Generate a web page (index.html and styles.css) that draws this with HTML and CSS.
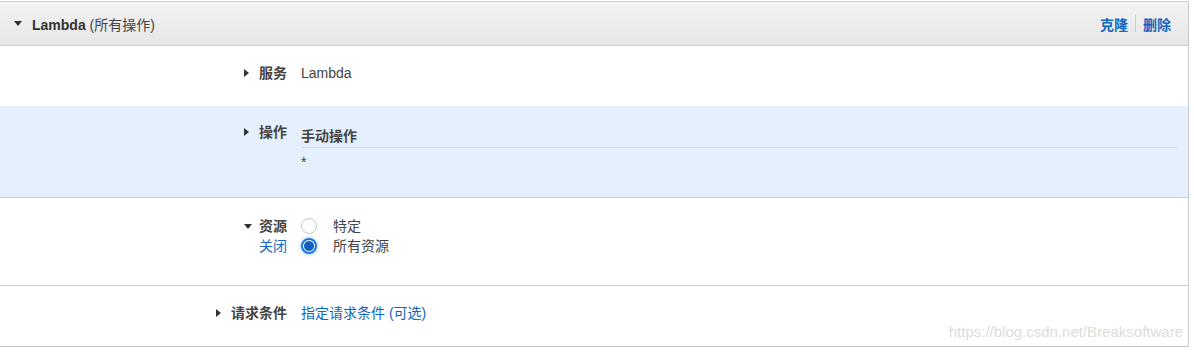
FILE: index.html
```html
<!DOCTYPE html>
<html lang="zh">
<head>
    <meta charset="UTF-8">
    <title>Lambda 权限</title>
    <link rel="stylesheet" href="styles.css">
</head>
<body>
    <div class="panel">
        <div class="panel-head">
            <span class="caret-down"></span>
            <span class="head-title"><b>Lambda</b> (所有操作)</span>
            <span class="head-actions">
                <a href="#">克隆</a><span class="sep"></span><a href="#">删除</a>
            </span>
        </div>

        <div class="row row-service">
            <div class="label"><span class="caret-right"></span>服务</div>
            <div class="value">Lambda</div>
        </div>

        <div class="row row-action">
            <div class="label"><span class="caret-right"></span>操作</div>
            <div class="value">
                <div class="action-title">手动操作</div>
                <div class="action-list">*</div>
            </div>
        </div>

        <div class="row row-resource">
            <div class="label">
                <div><span class="caret-down small"></span>资源</div>
                <a href="#">关闭</a>
            </div>
            <div class="value">
                <label class="radio"><span class="dot"></span>特定</label>
                <label class="radio"><span class="dot checked"></span>所有资源</label>
            </div>
        </div>

        <div class="row row-cond">
            <div class="label"><span class="caret-right"></span>请求条件</div>
            <div class="value"><a href="#">指定请求条件 (可选)</a></div>
        </div>

        <div class="watermark">https://blog.csdn.net/Breaksoftware</div>
    </div>
</body>
</html>
```

FILE: styles.css
```css
body {
    margin: 0;
    padding-top: 1px;
    font-family: "Liberation Sans", Arial, "Noto Sans CJK SC", sans-serif;
    font-size: 14px;
    color: #444;
    background: #fff;
}
a {
    color: #1166bb;
    text-decoration: none;
}
.panel {
    position: relative;
    width: 1188px;
    border-top: 1px solid #cfcfcf;
    border-right: 1px solid #c8c8c8;
    border-bottom: 1px solid #c8c8c8;
}
.panel-head {
    display: flex;
    align-items: center;
    height: 43px;
    padding: 0 17px 0 14px;
    background: linear-gradient(#f3f3f3, #e6e6e6);
    border-bottom: 1px solid #cfcfcf;
    color: #444;
}
.head-title {
    margin-left: 10px;
}
.head-title b {
    color: #333;
}
.head-actions {
    margin-left: auto;
    display: flex;
    align-items: center;
    font-weight: bold;
}
.sep {
    width: 1px;
    height: 17px;
    background: #ccc;
    margin: 0 7px;
}
.caret-down {
    display: inline-block;
    width: 0;
    height: 0;
    border-left: 4px solid transparent;
    border-right: 4px solid transparent;
    border-top: 5px solid #333;
}
.caret-down.small {
    margin-right: 7px;
    vertical-align: 2px;
}
.caret-right {
    display: inline-block;
    width: 0;
    height: 0;
    border-top: 4px solid transparent;
    border-bottom: 4px solid transparent;
    border-left: 5px solid #333;
    margin-right: 10px;
    vertical-align: 1px;
}
.row {
    display: grid;
    grid-template-columns: 287px 1fr;
    column-gap: 14px;
    box-sizing: border-box;
    border-bottom: 1px solid #cfcfcf;
}
.label {
    text-align: right;
    font-weight: bold;
    color: #444;
    line-height: 20px;
}
.label a {
    font-weight: normal;
}
.value {
    line-height: 20px;
    padding-right: 11px;
}
.row-service {
    height: 60px;
    padding-top: 17px;
    border-bottom: none;
}
.row-action {
    height: 92px;
    padding-top: 16px;
    background: #e5f0fc;
}
.action-title {
    font-weight: bold;
    padding-top: 4px;
    padding-bottom: 1px;
    border-bottom: 1px solid #d6dbe0;
}
.action-list {
    padding-top: 4px;
}
.row-resource {
    height: 88px;
    padding-top: 18px;
}
.radio {
    display: flex;
    align-items: center;
    height: 20px;
    color: #444;
}
.dot {
    width: 14px;
    height: 14px;
    border: 1px solid #c9c9c9;
    border-radius: 50%;
    margin-right: 16px;
    background: #fff;
    box-sizing: content-box;
}
.dot.checked {
    border: 2px solid #1a73d9;
    width: 12px;
    height: 12px;
    background: radial-gradient(circle, #0f5fbf 0 4.5px, #fff 5.5px);
    box-shadow: 0 0 4px rgba(30, 120, 220, 0.45);
}
.row-cond {
    height: 60px;
    padding-top: 17px;
    border-bottom: none;
}
.watermark {
    position: absolute;
    right: 5px;
    bottom: 6px;
    font-size: 15px;
    color: #dcdcdc;
}
```
